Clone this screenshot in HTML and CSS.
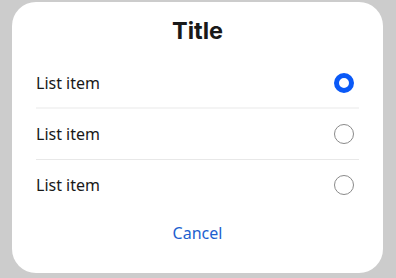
FILE: index.html
```html
<!DOCTYPE html>
<html>
<head>
<meta charset="utf-8">
<link rel="stylesheet" href="styles.css">
</head>
<body>
<div class="dialog">
  <div class="title">Title</div>
  <div class="list">
    <div class="row">
      <span class="label">List item</span>
      <span class="radio checked"></span>
    </div>
    <div class="divider soft"></div>
    <div class="row">
      <span class="label">List item</span>
      <span class="radio"></span>
    </div>
    <div class="divider"></div>
    <div class="row">
      <span class="label">List item</span>
      <span class="radio"></span>
    </div>
  </div>
  <div class="actions">
    <span class="cancel">Cancel</span>
  </div>
</div>
</body>
</html>
```
FILE: styles.css
```css
html, body {
  margin: 0;
  padding: 0;
  background: #cccccc;
}
body {
  width: 396px;
  height: 278px;
  padding: 2px 13px 5px 12px;
  box-sizing: border-box;
  font-family: "Noto Sans", "Open Sans", sans-serif;
}
.dialog {
  background: #ffffff;
  border-radius: 24px;
  height: 271px;
  padding: 0 24px 16px 24px;
  box-sizing: border-box;
  display: flex;
  flex-direction: column;
}
.title {
  height: 57px;
  display: flex;
  align-items: center;
  justify-content: center;
  font-family: Inter, "Noto Sans", sans-serif;
  font-weight: 700;
  font-size: 23.5px;
  color: #191919;
  padding-top: 1px;
  box-sizing: border-box;
}
.list {
  display: flex;
  flex-direction: column;
}
.row {
  height: 50px;
  display: flex;
  align-items: center;
  justify-content: space-between;
}
.label {
  font-size: 16px;
  color: #191919;
  padding-top: 1px;
}
.radio {
  width: 20px;
  height: 20px;
  box-sizing: border-box;
  border-radius: 50%;
  border: 1px solid #8a8a8a;
  margin-right: 5px;
}
.radio.checked {
  border: 5px solid #0a59f7;
}
.divider {
  height: 1px;
  background: #e8e8e8;
}
.divider.soft {
  height: 2px;
  margin-top: -1px;
  background: #f4f4f4;
}
.actions {
  height: 48px;
  display: flex;
  align-items: center;
  justify-content: center;
}
.cancel {
  font-size: 16px;
  color: #1d5fcf;
}
```
